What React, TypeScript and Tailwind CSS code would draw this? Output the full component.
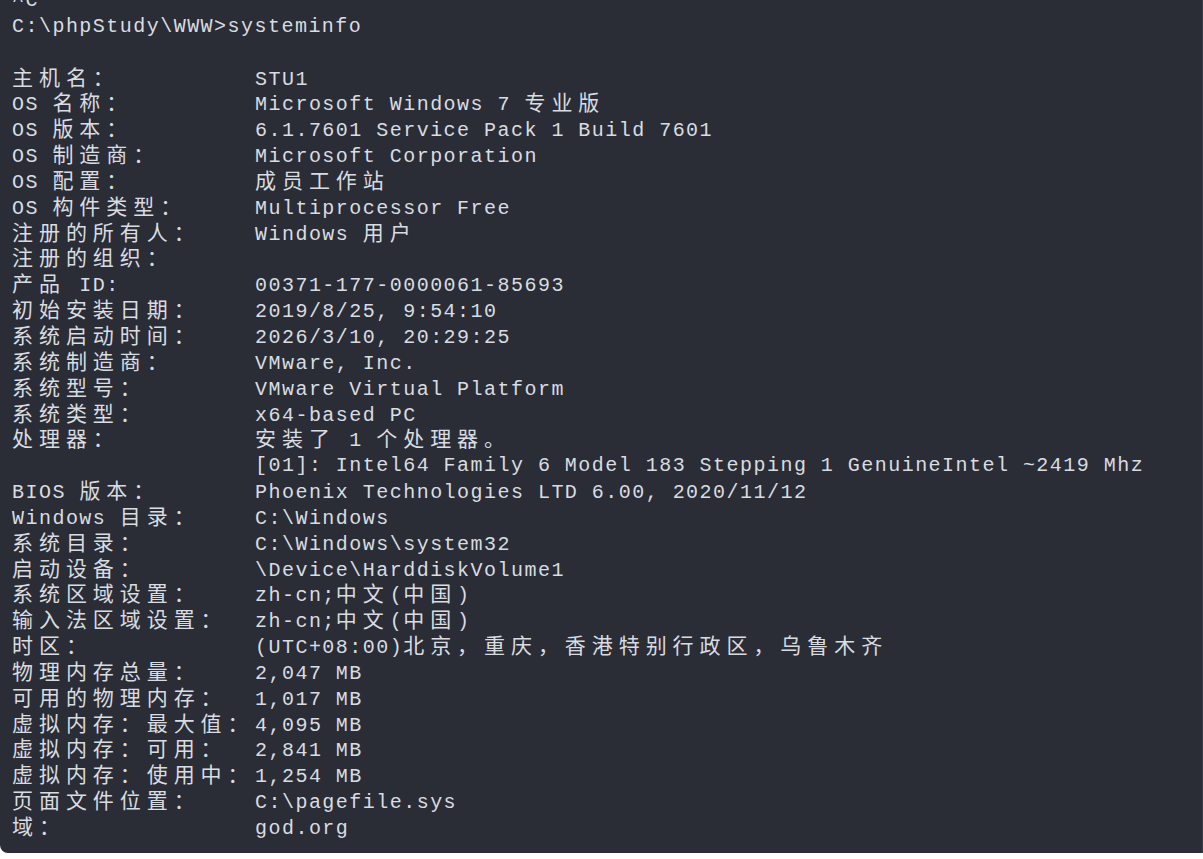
const CJK = /([\u2e80-\u9fff\u3000-\u303f\uff00-\uffef]+)/;

function Seg({ text }: { text: string }) {
  return (
    <>
      {text.split(CJK).map((part, i) =>
        i % 2 === 1 ? (
          <span
            key={i}
            className="font-['Noto_Sans_CJK_SC',sans-serif] text-[21px] leading-none tracking-[5.94px]"
          >
            {part}
          </span>
        ) : (
          part
        )
      )}
    </>
  );
}

const rows: [string, string][] = [
  ["主机名：", "STU1"],
  ["OS 名称：", "Microsoft Windows 7 专业版"],
  ["OS 版本：", "6.1.7601 Service Pack 1 Build 7601"],
  ["OS 制造商：", "Microsoft Corporation"],
  ["OS 配置：", "成员工作站"],
  ["OS 构件类型：", "Multiprocessor Free"],
  ["注册的所有人：", "Windows 用户"],
  ["注册的组织：", ""],
  ["产品 ID:", "00371-177-0000061-85693"],
  ["初始安装日期：", "2019/8/25, 9:54:10"],
  ["系统启动时间：", "2026/3/10, 20:29:25"],
  ["系统制造商：", "VMware, Inc."],
  ["系统型号：", "VMware Virtual Platform"],
  ["系统类型：", "x64-based PC"],
  ["处理器：", "安装了 1 个处理器。"],
  ["", "[01]: Intel64 Family 6 Model 183 Stepping 1 GenuineIntel ~2419 Mhz"],
  ["BIOS 版本：", "Phoenix Technologies LTD 6.00, 2020/11/12"],
  ["Windows 目录：", "C:\\Windows"],
  ["系统目录：", "C:\\Windows\\system32"],
  ["启动设备：", "\\Device\\HarddiskVolume1"],
  ["系统区域设置：", "zh-cn;中文(中国)"],
  ["输入法区域设置：", "zh-cn;中文(中国)"],
  ["时区：", "(UTC+08:00)北京，重庆，香港特别行政区，乌鲁木齐"],
  ["物理内存总量：", "2,047 MB"],
  ["可用的物理内存：", "1,017 MB"],
  ["虚拟内存：最大值：", "4,095 MB"],
  ["虚拟内存：可用：", "2,841 MB"],
  ["虚拟内存：使用中：", "1,254 MB"],
  ["页面文件位置：", "C:\\pagefile.sys"],
  ["域：", "god.org"],
];

export default function App() {
  return (
    <div className="w-[1203px] h-[859px] bg-white">
      <div className="h-[853px] overflow-hidden rounded-bl-[8px] border-r border-[#3a3e48] bg-[#2a2d35] text-[#d9dce1] font-['Liberation_Mono',monospace] text-[20px] tracking-[1.47px] leading-[25.85px]">
        <div className="-mt-[12px] pl-[12px]">
          <div className="h-[25.85px] whitespace-pre">^C</div>
          <div className="h-[25.85px] whitespace-pre">C:\phpStudy\WWW&gt;systeminfo</div>
          <div className="h-[25.85px]" />
          {rows.map(([label, value], i) => (
            <div key={i} className="flex h-[25.85px] items-baseline whitespace-pre">
              <div className="w-[243px] shrink-0">
                <Seg text={label} />
              </div>
              <div>
                <Seg text={value} />
              </div>
            </div>
          ))}
        </div>
      </div>
    </div>
  );
}
